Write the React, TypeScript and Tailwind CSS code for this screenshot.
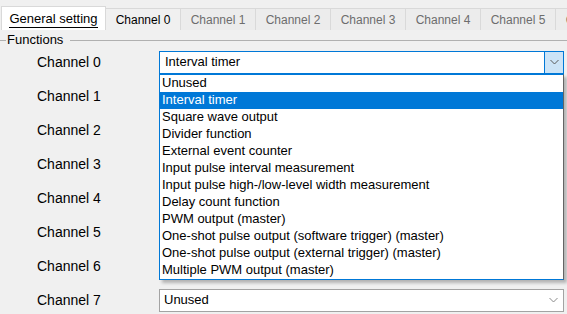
import type { ReactNode } from "react";

const CHANNEL_TABS = ["Channel 0", "Channel 1", "Channel 2", "Channel 3", "Channel 4", "Channel 5", "Channel 6"];

const FUNCTION_OPTIONS = [
  "Unused",
  "Interval timer",
  "Square wave output",
  "Divider function",
  "External event counter",
  "Input pulse interval measurement",
  "Input pulse high-/low-level width measurement",
  "Delay count function",
  "PWM output (master)",
  "One-shot pulse output (software trigger) (master)",
  "One-shot pulse output (external trigger) (master)",
  "Multiple PWM output (master)",
];

const FONT = "font-['Liberation_Sans',Arial,sans-serif]";

function Chevron({ color }: { color: string }) {
  return (
    <svg width="9" height="6" viewBox="0 0 9 6" className="block">
      <polyline points="0.5,1 4.5,5 8.5,1" fill="none" stroke={color} strokeWidth="1" />
    </svg>
  );
}

function FunctionSelect({ value, open }: { value: string; open?: boolean }) {
  if (open) {
    return (
      <div className="relative h-[23px] w-[405px]">
        <div className="flex h-full w-full border border-[#0078d7] bg-white">
          <div className="flex flex-1 items-center pl-[5px] text-[13px] text-black">{value}</div>
          <div className="flex w-[19px] items-center justify-center border-l border-[#0078d7] bg-[#cce4f7]">
            <Chevron color="#5a5a5a" />
          </div>
        </div>

        {/* open list, drawn over the rows below */}
        <ul className="absolute left-0 top-[23px] z-10 w-[405px] border border-[#0078d7] border-r-[#646464] bg-white shadow-[3px_3px_3px_rgba(0,0,0,0.25)]">
          {FUNCTION_OPTIONS.map((option) => (
            <li
              key={option}
              className={
                option === value
                  ? "flex h-[17px] items-center bg-[#0078d7] pl-[2px] text-[13px] text-white"
                  : "flex h-[17px] items-center pl-[2px] text-[13px] text-black"
              }
            >
              {option}
            </li>
          ))}
        </ul>
      </div>
    );
  }

  return (
    <div className="flex h-[23px] w-[405px] border border-[#a3a3a3] bg-white">
      <div className="flex flex-1 items-center pl-[4px] text-[13px] text-black">{value}</div>
      <div className="flex w-[19px] items-center justify-center">
        <Chevron color="#8a8a8a" />
      </div>
    </div>
  );
}

function ChannelRow({ label, children }: { label: string; children?: ReactNode }) {
  return (
    <div className="flex h-[34px] items-center">
      <div className="w-[159px] pl-[37px] text-[14px] text-black">{label}</div>
      {children}
    </div>
  );
}

export default function App() {
  return (
    <div className={`${FONT} h-[314px] w-[567px] overflow-hidden bg-[#f0f0f0]`}>
      {/* tab strip */}
      <div className="flex h-[30px] items-end overflow-hidden pl-[1px]">
        <div className="flex h-[24px] w-[105px] shrink-0 items-start justify-center border-x border-t border-[#d9d9d9] bg-white pt-[3px]">
          <span className="border-b border-black text-[13px] leading-[17px] text-black">General setting</span>
        </div>
        {CHANNEL_TABS.map((tab, index) => (
          <div
            key={tab}
            className={
              index === 0
                ? "flex h-[22px] w-[75px] shrink-0 items-center justify-center border-r border-t border-[#d9d9d9] bg-[#f0f0f0] text-[12px] text-black"
                : "flex h-[22px] w-[75px] shrink-0 items-center justify-center border-r border-t border-[#d9d9d9] bg-[#ececec] text-[12px] text-[#6d6d6d]"
            }
          >
            {tab}
          </div>
        ))}
      </div>

      {/* group box legend */}
      <div className="mt-[3px] flex h-[14px] items-center">
        <div className="h-px w-[6px] bg-[#b0b0b0]" />
        <span className="px-[1px] text-[13px] leading-[14px] text-black">Functions</span>
        <div className="ml-[6px] h-px flex-1 bg-[#b0b0b0]" />
      </div>

      <div className="mt-[-2px]">
        <ChannelRow label="Channel 0">
          <FunctionSelect value="Interval timer" open />
        </ChannelRow>
        {/* channels 1-6: their combo boxes sit under the open list */}
        {[1, 2, 3, 4, 5, 6].map((channel) => (
          <ChannelRow key={channel} label={`Channel ${channel}`}>
            <div className="h-[23px] w-[405px] border border-[#a3a3a3] bg-white" />
          </ChannelRow>
        ))}
        <ChannelRow label="Channel 7">
          <FunctionSelect value="Unused" />
        </ChannelRow>
      </div>
    </div>
  );
}
